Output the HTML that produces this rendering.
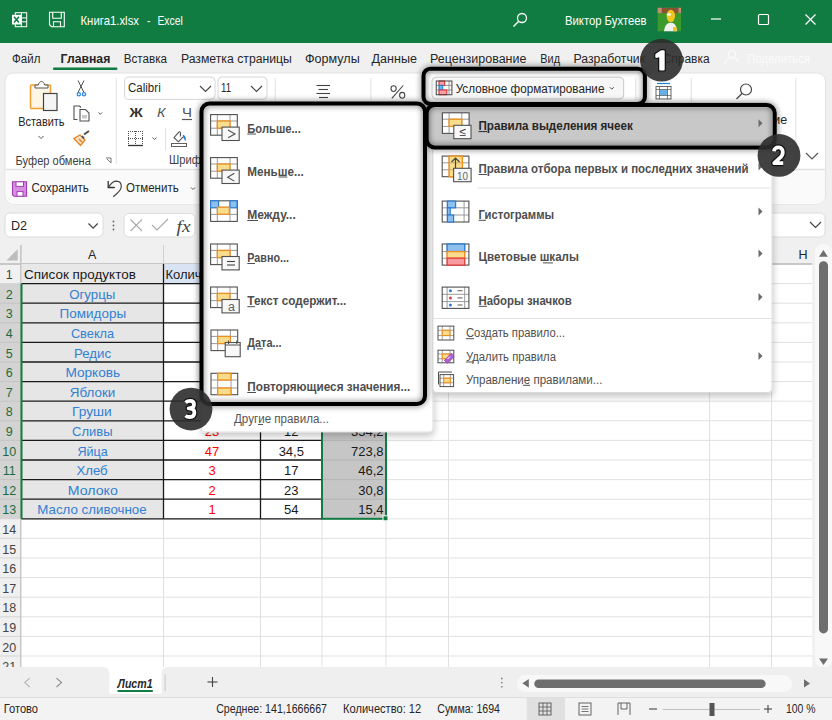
<!DOCTYPE html><html><head><meta charset="utf-8"><style>html,body{margin:0;padding:0;width:832px;height:720px;overflow:hidden;background:#f0f0f0}svg{display:block}text{font-family:"Liberation Sans",sans-serif}</style></head><body>
<svg width="832" height="720" viewBox="0 0 832 720">
<defs><filter id="sh" x="-20%" y="-20%" width="140%" height="140%"><feGaussianBlur in="SourceAlpha" stdDeviation="3"/><feOffset dx="0" dy="2"/><feComponentTransfer><feFuncA type="linear" slope="0.35"/></feComponentTransfer><feMerge><feMergeNode/><feMergeNode in="SourceGraphic"/></feMerge></filter><filter id="sh2" x="-10%" y="-10%" width="120%" height="130%"><feGaussianBlur in="SourceAlpha" stdDeviation="3.5"/><feOffset dx="1" dy="4"/><feComponentTransfer><feFuncA type="linear" slope="0.22"/></feComponentTransfer><feMerge><feMergeNode/><feMergeNode in="SourceGraphic"/></feMerge></filter><filter id="bs" x="-10%" y="-10%" width="120%" height="120%"><feGaussianBlur in="SourceAlpha" stdDeviation="3"/><feComponentTransfer><feFuncA type="linear" slope="0.6"/></feComponentTransfer><feMerge><feMergeNode/><feMergeNode in="SourceGraphic"/></feMerge></filter></defs>
<rect x="0" y="0" width="832" height="720" fill="#f0f0f0" stroke="none" stroke-width="1" rx="0" />
<rect x="0" y="0" width="832" height="43" fill="#117c41" stroke="none" stroke-width="1" rx="0" />
<rect x="15.3" y="12.7" width="11.4" height="14" fill="none" stroke="#fff" stroke-width="1" rx="0" />
<line x1="15.3" y1="17.9" x2="26.7" y2="17.9" stroke="#fff" stroke-width="1" />
<line x1="15.3" y1="21.8" x2="26.7" y2="21.8" stroke="#fff" stroke-width="1" />
<line x1="21.4" y1="12.7" x2="21.4" y2="26.7" stroke="#fff" stroke-width="1" />
<rect x="12" y="14.8" width="9" height="9.7" fill="#fff" stroke="none" stroke-width="1" rx="0" />
<path d="M14 16.8l5 5.8M19 16.8l-5 5.8" fill="none" stroke="#117c41" stroke-width="1.5" />
<path d="M49.5 12.3H64.3V26.7H51.5L49.5 24.7Z" fill="none" stroke="#fff" stroke-width="1.1" />
<path d="M52.7 12.3V18.3H61.3V12.3" fill="none" stroke="#fff" stroke-width="1.1" />
<path d="M53.5 26.7V21.8H60.5V26.7" fill="none" stroke="#fff" stroke-width="1.1" />
<text x="80.5" y="24.8" font-size="13" fill="#ffffff" font-weight="normal" font-style="normal" text-anchor="start" textLength="58.5" lengthAdjust="spacingAndGlyphs" >Книга1.xlsx</text>
<text x="147" y="24.8" font-size="13" fill="#ffffff" font-weight="normal" font-style="normal" text-anchor="start" textLength="3.5" lengthAdjust="spacingAndGlyphs" >-</text>
<text x="157.5" y="24.8" font-size="13" fill="#ffffff" font-weight="normal" font-style="normal" text-anchor="start" textLength="25.2" lengthAdjust="spacingAndGlyphs" >Excel</text>
<circle cx="522" cy="18" r="4.5" fill="none" stroke="#fff" stroke-width="1.3"/>
<line x1="518.5" y1="21.5" x2="513.5" y2="26.5" stroke="#fff" stroke-width="1.4" />
<text x="565" y="24.8" font-size="13" fill="#ffffff" font-weight="normal" font-style="normal" text-anchor="start" textLength="81.5" lengthAdjust="spacingAndGlyphs" >Виктор Бухтеев</text>
<rect x="657.7" y="7.8" width="23.3" height="23.4" fill="#3c9a2c" stroke="none" stroke-width="1" rx="0" />
<rect x="657.7" y="7.8" width="23.3" height="5.3" fill="#8a5430" stroke="none" stroke-width="1" rx="0" />
<rect x="657.7" y="7.8" width="4" height="5.3" fill="#c09070" stroke="none" stroke-width="1" rx="0" />
<rect x="678.5" y="7.8" width="2.5" height="5.3" fill="#c09070" stroke="none" stroke-width="1" rx="0" />
<ellipse cx="670.8" cy="16" rx="4.2" ry="6.3" fill="#f2c420"/>
<ellipse cx="669" cy="14.5" rx="2" ry="1.3" fill="#ffffff"/>
<path d="M664 31.2c0.5-4 2-8.5 6.5-8.5s6 3 6.5 8.5z" fill="#f0f0f0" stroke="none" stroke-width="1" />
<rect x="673" y="27" width="3.5" height="4.2" fill="#f2c420" stroke="none" stroke-width="1" rx="0" />
<line x1="711" y1="19" x2="721" y2="19" stroke="#fff" stroke-width="1.2" />
<rect x="758.5" y="14.5" width="10" height="10" fill="none" stroke="#fff" stroke-width="1.2" rx="1" />
<line x1="805.5" y1="14.5" x2="815.5" y2="24.5" stroke="#fff" stroke-width="1.2" />
<line x1="815.5" y1="14.5" x2="805.5" y2="24.5" stroke="#fff" stroke-width="1.2" />
<text x="12.1" y="62.7" font-size="12.5" fill="#262626" font-weight="normal" font-style="normal" text-anchor="start" textLength="28.3" lengthAdjust="spacingAndGlyphs" >Файл</text>
<text x="60.6" y="62.7" font-size="12.5" fill="#262626" font-weight="bold" font-style="normal" text-anchor="start" textLength="49.7" lengthAdjust="spacingAndGlyphs" >Главная</text>
<text x="123.7" y="62.7" font-size="12.5" fill="#262626" font-weight="normal" font-style="normal" text-anchor="start" textLength="43.3" lengthAdjust="spacingAndGlyphs" >Вставка</text>
<text x="180.9" y="62.7" font-size="12.5" fill="#262626" font-weight="normal" font-style="normal" text-anchor="start" textLength="111" lengthAdjust="spacingAndGlyphs" >Разметка страницы</text>
<text x="305" y="62.7" font-size="12.5" fill="#262626" font-weight="normal" font-style="normal" text-anchor="start" textLength="54.7" lengthAdjust="spacingAndGlyphs" >Формулы</text>
<text x="371.6" y="62.7" font-size="12.5" fill="#262626" font-weight="normal" font-style="normal" text-anchor="start" textLength="45.3" lengthAdjust="spacingAndGlyphs" >Данные</text>
<text x="430" y="62.7" font-size="12.5" fill="#262626" font-weight="normal" font-style="normal" text-anchor="start" textLength="96.4" lengthAdjust="spacingAndGlyphs" >Рецензирование</text>
<text x="540.3" y="62.7" font-size="12.5" fill="#262626" font-weight="normal" font-style="normal" text-anchor="start" textLength="19.7" lengthAdjust="spacingAndGlyphs" >Вид</text>
<text x="573.5" y="62.7" font-size="12.5" fill="#262626" font-weight="normal" font-style="normal" text-anchor="start" textLength="71.5" lengthAdjust="spacingAndGlyphs" >Разработчик</text>
<text x="662.6" y="62.7" font-size="12.5" fill="#262626" font-weight="normal" font-style="normal" text-anchor="start" textLength="47" lengthAdjust="spacingAndGlyphs" >Справка</text>
<rect x="53" y="67.5" width="64.4" height="2.5" fill="#117c41" stroke="none" stroke-width="1" rx="1" />
<circle cx="732" cy="54" r="3.5" fill="none" stroke="#fbfbfb" stroke-width="1.2"/>
<path d="M725 65c0-5 3-7 7-7s6 2 6.5 4" fill="none" stroke="#fbfbfb" stroke-width="1.2" />
<text x="747.3" y="62.7" font-size="12.5" fill="#fbfbfb" font-weight="normal" font-style="normal" text-anchor="start" textLength="62.5" lengthAdjust="spacingAndGlyphs" >Поделиться</text>
<rect x="5" y="73" width="820.5" height="131" fill="#ffffff" stroke="#e2e2e2" stroke-width="1" rx="8" />
<path d="M5.5 170H825V196A8 8 0 0 1 817 204H13.5A8 8 0 0 1 5.5 196Z" fill="#fafafa" stroke="none" stroke-width="1" />
<line x1="6" y1="169.5" x2="825" y2="169.5" stroke="#e2e2e2" stroke-width="1.6" />
<rect x="30.5" y="85" width="20" height="23.5" fill="#fdf5e6" stroke="#f0a030" stroke-width="1.5" rx="1" />
<path d="M35 88v-3h3.5c0-2 1.5-3.5 3-3.5s3 1.5 3 3.5h3.5v3z" fill="#fff" stroke="#555" stroke-width="1" />
<rect x="43.5" y="93.5" width="13.5" height="17" fill="#f5f5f5" stroke="#444" stroke-width="1.2" rx="0" />
<text x="18.2" y="126" font-size="12.5" fill="#262626" font-weight="normal" font-style="normal" text-anchor="start" textLength="46.3" lengthAdjust="spacingAndGlyphs" >Вставить</text>
<path d="M38.5 136l2.5 2.5 2.5-2.5" fill="none" stroke="#555" stroke-width="1" />
<path d="M78 80.5l6 12M84 80.5l-6 12" fill="none" stroke="#505050" stroke-width="1" />
<circle cx="78.8" cy="94.3" r="1.6" fill="none" stroke="#2b8ae0" stroke-width="1.3"/><circle cx="84" cy="94.3" r="1.6" fill="none" stroke="#2b8ae0" stroke-width="1.3"/>
<path d="M77.5 119.5h-3.5v-13.5h5.5l1.5 1.5" fill="none" stroke="#505050" stroke-width="1.1" />
<path d="M80 109.5h5.5l3.5 3.5v8h-9z" fill="#fff" stroke="#505050" stroke-width="1.1" />
<rect x="82" y="115" width="5" height="3.5" fill="#c8c8c8" stroke="none" stroke-width="1" rx="0" />
<path d="M98.5 112.5l1.8 1.8 1.8-1.8" fill="none" stroke="#555" stroke-width="1" />
<path d="M74 138.5l6.5 7 4.5-5.5-5-5z" fill="#fbe3c6" stroke="#e88020" stroke-width="1.3" />
<path d="M79 139l3 3" fill="none" stroke="#e88020" stroke-width="1.5" />
<path d="M82 136l2 2.5M84 134.5l5-3.5" fill="none" stroke="#505050" stroke-width="2" />
<text x="15.6" y="164.5" font-size="12.5" fill="#404040" font-weight="normal" font-style="normal" text-anchor="start" textLength="75.3" lengthAdjust="spacingAndGlyphs" >Буфер обмена</text>
<path d="M106 158h5v5M107 159l4 4" fill="none" stroke="#666" stroke-width="0.9" />
<line x1="116.25" y1="78" x2="116.25" y2="164" stroke="#e1e1e1" stroke-width="1" />
<rect x="124.6" y="77" width="90.4" height="22.4" fill="#fff" stroke="#d6d6d6" stroke-width="1" rx="4" />
<text x="128" y="92.2" font-size="12.5" fill="#262626" font-weight="normal" font-style="normal" text-anchor="start" textLength="32.7" lengthAdjust="spacingAndGlyphs" >Calibri</text>
<path d="M200 86l5.5 5.5 5.5-5.5" fill="none" stroke="#444" stroke-width="1.1" />
<rect x="218" y="77" width="49" height="22.4" fill="#fff" stroke="#d6d6d6" stroke-width="1" rx="4" />
<text x="221" y="92.2" font-size="12" fill="#262626" font-weight="normal" font-style="normal" text-anchor="start" textLength="10" lengthAdjust="spacingAndGlyphs" >11</text>
<path d="M251 86l5.5 5.5 5.5-5.5" fill="none" stroke="#444" stroke-width="1.1" />
<line x1="275.2" y1="78" x2="275.2" y2="100" stroke="#e1e1e1" stroke-width="1" />
<line x1="370.9" y1="78" x2="370.9" y2="100" stroke="#e1e1e1" stroke-width="1" />
<line x1="316.5" y1="85.5" x2="330" y2="85.5" stroke="#444" stroke-width="1.1" />
<line x1="318.5" y1="89.5" x2="328" y2="89.5" stroke="#444" stroke-width="1.1" />
<line x1="316.5" y1="93.5" x2="330" y2="93.5" stroke="#444" stroke-width="1.1" />
<line x1="319" y1="97.5" x2="328" y2="97.5" stroke="#444" stroke-width="1.1" />
<ellipse cx="393.6" cy="88.6" rx="2.6" ry="2.9" fill="none" stroke="#444" stroke-width="1.1"/><ellipse cx="402.2" cy="95.3" rx="2.6" ry="2.9" fill="none" stroke="#444" stroke-width="1.1"/>
<line x1="403.2" y1="85.5" x2="391.8" y2="98.4" stroke="#444" stroke-width="1.1" />
<text x="129.4" y="117" font-size="13.5" fill="#333" font-weight="bold" font-style="normal" text-anchor="start" textLength="13.2" lengthAdjust="spacingAndGlyphs" >Ж</text>
<text x="157" y="117" font-size="13" fill="#555" font-weight="normal" font-style="italic" text-anchor="start" textLength="8.5" lengthAdjust="spacingAndGlyphs" >К</text>
<text x="182" y="117" font-size="13" fill="#555" font-weight="normal" font-style="normal" text-anchor="start" textLength="10" lengthAdjust="spacingAndGlyphs" >Ч</text>
<line x1="182" y1="119.5" x2="192" y2="119.5" stroke="#555" stroke-width="1.2" />
<line x1="128" y1="131.5" x2="143" y2="131.5" stroke="#555" stroke-width="1" stroke-dasharray="1 1"/>
<line x1="128" y1="138.5" x2="143" y2="138.5" stroke="#555" stroke-width="1" stroke-dasharray="1 1"/>
<line x1="128.5" y1="131" x2="128.5" y2="145" stroke="#555" stroke-width="1" stroke-dasharray="1 1"/>
<line x1="135.5" y1="131" x2="135.5" y2="145" stroke="#555" stroke-width="1" stroke-dasharray="1 1"/>
<line x1="142.5" y1="131" x2="142.5" y2="145" stroke="#555" stroke-width="1" stroke-dasharray="1 1"/>
<line x1="128" y1="145.5" x2="143" y2="145.5" stroke="#333" stroke-width="1.3" />
<path d="M152.5 137.5l2 2 2-2" fill="none" stroke="#555" stroke-width="1" />
<line x1="165.5" y1="127.6" x2="165.5" y2="150.5" stroke="#e1e1e1" stroke-width="1" />
<path d="M180.4 136.5V132.8Q180 131.2 178.8 132.2L174 137.6L178.5 141.8L183.1 136.8" fill="none" stroke="#505050" stroke-width="1.1" />
<path d="M182.6 134.4Q186.2 135.2 185.9 141.2Q184.2 139.6 183.3 137.6Z" fill="#2b7cd3" stroke="none" stroke-width="1" />
<rect x="171.5" y="143.5" width="15" height="3" fill="none" stroke="#606060" stroke-width="1" rx="0" />
<text x="169" y="163.75" font-size="12.5" fill="#404040" font-weight="normal" font-style="normal" text-anchor="start" textLength="32" lengthAdjust="spacingAndGlyphs" >Шриф</text>
<rect x="432" y="77.2" width="191.7" height="21.8" fill="#f7f7f7" stroke="#c8c8c8" stroke-width="1" rx="4" />
<rect x="436.25" y="81" width="15.65" height="13.75" fill="#fff" stroke="none" stroke-width="1" rx="0" />
<line x1="439.1" y1="81" x2="439.1" y2="94.75" stroke="#888" stroke-width="0.9" />
<line x1="449" y1="81" x2="449" y2="94.75" stroke="#888" stroke-width="0.9" />
<line x1="436.25" y1="85.4" x2="451.9" y2="85.4" stroke="#888" stroke-width="0.9" />
<line x1="436.25" y1="90" x2="451.9" y2="90" stroke="#888" stroke-width="0.9" />
<rect x="439.1" y="81" width="5.6" height="4.4" fill="#f7a0a8" stroke="#e02a2a" stroke-width="1" rx="0" />
<rect x="439.1" y="85.4" width="3.6" height="4.6" fill="#6ab4f0" stroke="#1a7fd6" stroke-width="1" rx="0" />
<rect x="439.1" y="90" width="7.7" height="4.75" fill="#f7a0a8" stroke="#e02a2a" stroke-width="1" rx="0" />
<rect x="436.25" y="81" width="15.65" height="13.75" fill="none" stroke="#444" stroke-width="1" rx="0" />
<text x="455.7" y="93" font-size="12.5" fill="#262626" font-weight="normal" font-style="normal" text-anchor="start" textLength="148.7" lengthAdjust="spacingAndGlyphs" >Условное форматирование</text>
<path d="M609.8 87.2l2 2 2-2" fill="none" stroke="#555" stroke-width="1" />
<line x1="635.8" y1="78" x2="635.8" y2="100" stroke="#e1e1e1" stroke-width="1" />
<rect x="656" y="86.5" width="15" height="12.5" fill="#fff" stroke="#555" stroke-width="0.9" rx="0" />
<rect x="659.5" y="89.5" width="8" height="6" fill="#6aaee8" stroke="none" stroke-width="1" rx="0" />
<line x1="656" y1="89.5" x2="671" y2="89.5" stroke="#555" stroke-width="0.7" />
<line x1="656" y1="95.5" x2="671" y2="95.5" stroke="#555" stroke-width="0.7" />
<line x1="659.5" y1="86.5" x2="659.5" y2="99" stroke="#555" stroke-width="0.7" />
<line x1="667.5" y1="86.5" x2="667.5" y2="99" stroke="#555" stroke-width="0.7" />
<line x1="657" y1="83.5" x2="670" y2="83.5" stroke="#1a7fd6" stroke-width="1.2" />
<line x1="691.3" y1="78" x2="691.3" y2="164" stroke="#e1e1e1" stroke-width="1" />
<circle cx="746" cy="89.5" r="5.5" fill="none" stroke="#444" stroke-width="1.2"/>
<line x1="742" y1="93.5" x2="736.5" y2="99" stroke="#444" stroke-width="1.3" />
<text x="787.2" y="123.6" font-size="12.5" fill="#262626" font-weight="normal" font-style="normal" text-anchor="end" >ие</text>
<line x1="795.8" y1="78" x2="795.8" y2="164" stroke="#e1e1e1" stroke-width="1" />
<path d="M806 153l6 6 6-6" fill="none" stroke="#555" stroke-width="1.2" />
<path d="M12.5 181.8H26.5V196.2H14L12.5 194.7Z" fill="#d88ee0" stroke="#a23cb4" stroke-width="1.1" />
<rect x="16" y="181.8" width="7.5" height="4.6" fill="#ffffff" stroke="#a23cb4" stroke-width="1" rx="0" />
<rect x="17" y="191.6" width="6" height="4.6" fill="#ffffff" stroke="#a23cb4" stroke-width="1" rx="0" />
<text x="31.5" y="191.7" font-size="12.5" fill="#262626" font-weight="normal" font-style="normal" text-anchor="start" textLength="57.3" lengthAdjust="spacingAndGlyphs" >Сохранить</text>
<path d="M108.2 181V187.5H114.8" fill="none" stroke="#333" stroke-width="1.3" />
<path d="M108.8 186.8Q112.5 181.2 116.5 181.2Q121.3 181.4 121.3 186.5Q121.3 190.5 113.2 196.8" fill="none" stroke="#444" stroke-width="1.2" />
<text x="126" y="191.7" font-size="12.5" fill="#262626" font-weight="normal" font-style="normal" text-anchor="start" textLength="52.7" lengthAdjust="spacingAndGlyphs" >Отменить</text>
<path d="M191 187.5l2 2 2-2" fill="none" stroke="#555" stroke-width="1" />
<rect x="5" y="213" width="98" height="24" fill="#fff" stroke="#dcdcdc" stroke-width="1" rx="5" />
<text x="11" y="230" font-size="12" fill="#262626" font-weight="normal" font-style="normal" text-anchor="start" textLength="16" lengthAdjust="spacingAndGlyphs" >D2</text>
<path d="M88.5 223.5l4.6 4.6 4.6-4.6" fill="none" stroke="#444" stroke-width="1.2" />
<circle cx="113.5" cy="221.5" r="0.9" fill="#666"/>
<circle cx="113.5" cy="225.5" r="0.9" fill="#666"/>
<circle cx="113.5" cy="229.5" r="0.9" fill="#666"/>
<rect x="124" y="213.4" width="71" height="23.6" fill="#fff" stroke="#dcdcdc" stroke-width="1" rx="5" />
<line x1="130.5" y1="219.5" x2="142" y2="231" stroke="#aaa" stroke-width="1.1" />
<line x1="142" y1="219.5" x2="130.5" y2="231" stroke="#aaa" stroke-width="1.1" />
<path d="M152 225l5 5 11-11" fill="none" stroke="#aaa" stroke-width="1.1" />
<text x="176.5" y="231.5" font-size="16" fill="#444" font-weight="normal" font-style="italic" text-anchor="start" textLength="14" lengthAdjust="spacingAndGlyphs" style="font-family:Liberation Serif">fx</text>
<rect x="430" y="213" width="395" height="24" fill="#fff" stroke="#dcdcdc" stroke-width="1" rx="5" />
<path d="M810 222l5.5 5.5 5.5-5.5" fill="none" stroke="#444" stroke-width="1.2" />
<rect x="21" y="264" width="791.5" height="403" fill="#ffffff" stroke="none" stroke-width="1" rx="0" />
<rect x="0" y="245" width="812.5" height="19" fill="#f0f0f0" stroke="none" stroke-width="1" rx="0" />
<path d="M17.7 249v11.6h-11.2z" fill="#bdbdbd" stroke="none" stroke-width="1" />
<rect x="0" y="264" width="21" height="403" fill="#f0f0f0" stroke="none" stroke-width="1" rx="0" />
<rect x="0" y="283.6" width="21" height="235.19999999999993" fill="#d3d3d3" stroke="none" stroke-width="1" rx="0" />
<line x1="21" y1="245" x2="21" y2="264" stroke="#d0d0d0" stroke-width="1" />
<line x1="163.5" y1="245" x2="163.5" y2="264" stroke="#d0d0d0" stroke-width="1" />
<line x1="260.5" y1="245" x2="260.5" y2="264" stroke="#d0d0d0" stroke-width="1" />
<line x1="322" y1="245" x2="322" y2="264" stroke="#d0d0d0" stroke-width="1" />
<line x1="386" y1="245" x2="386" y2="264" stroke="#d0d0d0" stroke-width="1" />
<line x1="448.5" y1="245" x2="448.5" y2="264" stroke="#d0d0d0" stroke-width="1" />
<line x1="709.5" y1="245" x2="709.5" y2="264" stroke="#d0d0d0" stroke-width="1" />
<line x1="771.5" y1="245" x2="771.5" y2="264" stroke="#d0d0d0" stroke-width="1" />
<line x1="0" y1="264" x2="812.5" y2="264" stroke="#c8c8c8" stroke-width="2" />
<text x="92.25" y="258.5" font-size="12.5" fill="#262626" font-weight="normal" font-style="normal" text-anchor="middle" >A</text>
<text x="803" y="258.5" font-size="12.5" fill="#262626" font-weight="normal" font-style="normal" text-anchor="middle" >H</text>
<line x1="21" y1="283.6" x2="812.5" y2="283.6" stroke="#e1e1e1" stroke-width="1" />
<line x1="21" y1="303.20000000000005" x2="812.5" y2="303.20000000000005" stroke="#e1e1e1" stroke-width="1" />
<line x1="21" y1="322.8" x2="812.5" y2="322.8" stroke="#e1e1e1" stroke-width="1" />
<line x1="21" y1="342.40000000000003" x2="812.5" y2="342.40000000000003" stroke="#e1e1e1" stroke-width="1" />
<line x1="21" y1="362.0" x2="812.5" y2="362.0" stroke="#e1e1e1" stroke-width="1" />
<line x1="21" y1="381.6" x2="812.5" y2="381.6" stroke="#e1e1e1" stroke-width="1" />
<line x1="21" y1="401.20000000000005" x2="812.5" y2="401.20000000000005" stroke="#e1e1e1" stroke-width="1" />
<line x1="21" y1="420.80000000000007" x2="812.5" y2="420.80000000000007" stroke="#e1e1e1" stroke-width="1" />
<line x1="21" y1="440.40000000000003" x2="812.5" y2="440.40000000000003" stroke="#e1e1e1" stroke-width="1" />
<line x1="21" y1="460.0" x2="812.5" y2="460.0" stroke="#e1e1e1" stroke-width="1" />
<line x1="21" y1="479.6" x2="812.5" y2="479.6" stroke="#e1e1e1" stroke-width="1" />
<line x1="21" y1="499.20000000000005" x2="812.5" y2="499.20000000000005" stroke="#e1e1e1" stroke-width="1" />
<line x1="21" y1="518.8000000000001" x2="812.5" y2="518.8000000000001" stroke="#e1e1e1" stroke-width="1" />
<line x1="21" y1="538.4" x2="812.5" y2="538.4" stroke="#e1e1e1" stroke-width="1" />
<line x1="21" y1="558.0000000000001" x2="812.5" y2="558.0000000000001" stroke="#e1e1e1" stroke-width="1" />
<line x1="21" y1="577.6" x2="812.5" y2="577.6" stroke="#e1e1e1" stroke-width="1" />
<line x1="21" y1="597.2" x2="812.5" y2="597.2" stroke="#e1e1e1" stroke-width="1" />
<line x1="21" y1="616.8000000000001" x2="812.5" y2="616.8000000000001" stroke="#e1e1e1" stroke-width="1" />
<line x1="21" y1="636.4" x2="812.5" y2="636.4" stroke="#e1e1e1" stroke-width="1" />
<line x1="21" y1="656.0000000000001" x2="812.5" y2="656.0000000000001" stroke="#e1e1e1" stroke-width="1" />
<line x1="163.5" y1="264" x2="163.5" y2="667" stroke="#e1e1e1" stroke-width="1" />
<line x1="260.5" y1="264" x2="260.5" y2="667" stroke="#e1e1e1" stroke-width="1" />
<line x1="322" y1="264" x2="322" y2="667" stroke="#e1e1e1" stroke-width="1" />
<line x1="386" y1="264" x2="386" y2="667" stroke="#e1e1e1" stroke-width="1" />
<line x1="448.5" y1="264" x2="448.5" y2="667" stroke="#e1e1e1" stroke-width="1" />
<line x1="709.5" y1="264" x2="709.5" y2="667" stroke="#e1e1e1" stroke-width="1" />
<line x1="771.5" y1="264" x2="771.5" y2="667" stroke="#e1e1e1" stroke-width="1" />
<rect x="21" y="264.0" width="142.5" height="19.6" fill="#e8e8e8" stroke="none" stroke-width="1" rx="0" />
<rect x="163.5" y="264.0" width="97" height="19.6" fill="#dae3f3" stroke="none" stroke-width="1" rx="0" />
<rect x="21" y="283.6" width="142.5" height="235.20000000000002" fill="#e7e6e6" stroke="none" stroke-width="1" rx="0" />
<rect x="322" y="283.6" width="64" height="235.20000000000002" fill="#c6c6c6" stroke="none" stroke-width="1" rx="0" />
<line x1="322" y1="303.20000000000005" x2="386" y2="303.20000000000005" stroke="#b4b4b4" stroke-width="1" />
<line x1="322" y1="322.8" x2="386" y2="322.8" stroke="#b4b4b4" stroke-width="1" />
<line x1="322" y1="342.40000000000003" x2="386" y2="342.40000000000003" stroke="#b4b4b4" stroke-width="1" />
<line x1="322" y1="362.0" x2="386" y2="362.0" stroke="#b4b4b4" stroke-width="1" />
<line x1="322" y1="381.6" x2="386" y2="381.6" stroke="#b4b4b4" stroke-width="1" />
<line x1="322" y1="401.20000000000005" x2="386" y2="401.20000000000005" stroke="#b4b4b4" stroke-width="1" />
<line x1="322" y1="420.80000000000007" x2="386" y2="420.80000000000007" stroke="#b4b4b4" stroke-width="1" />
<line x1="322" y1="440.40000000000003" x2="386" y2="440.40000000000003" stroke="#b4b4b4" stroke-width="1" />
<line x1="322" y1="460.0" x2="386" y2="460.0" stroke="#b4b4b4" stroke-width="1" />
<line x1="322" y1="479.6" x2="386" y2="479.6" stroke="#b4b4b4" stroke-width="1" />
<line x1="322" y1="499.20000000000005" x2="386" y2="499.20000000000005" stroke="#b4b4b4" stroke-width="1" />
<line x1="21" y1="283.6" x2="322" y2="283.6" stroke="#1a1a1a" stroke-width="1.3" />
<line x1="21" y1="303.20000000000005" x2="322" y2="303.20000000000005" stroke="#1a1a1a" stroke-width="1.3" />
<line x1="21" y1="322.8" x2="322" y2="322.8" stroke="#1a1a1a" stroke-width="1.3" />
<line x1="21" y1="342.40000000000003" x2="322" y2="342.40000000000003" stroke="#1a1a1a" stroke-width="1.3" />
<line x1="21" y1="362.0" x2="322" y2="362.0" stroke="#1a1a1a" stroke-width="1.3" />
<line x1="21" y1="381.6" x2="322" y2="381.6" stroke="#1a1a1a" stroke-width="1.3" />
<line x1="21" y1="401.20000000000005" x2="322" y2="401.20000000000005" stroke="#1a1a1a" stroke-width="1.3" />
<line x1="21" y1="420.80000000000007" x2="322" y2="420.80000000000007" stroke="#1a1a1a" stroke-width="1.3" />
<line x1="21" y1="440.40000000000003" x2="322" y2="440.40000000000003" stroke="#1a1a1a" stroke-width="1.3" />
<line x1="21" y1="460.0" x2="322" y2="460.0" stroke="#1a1a1a" stroke-width="1.3" />
<line x1="21" y1="479.6" x2="322" y2="479.6" stroke="#1a1a1a" stroke-width="1.3" />
<line x1="21" y1="499.20000000000005" x2="322" y2="499.20000000000005" stroke="#1a1a1a" stroke-width="1.3" />
<line x1="21" y1="518.8000000000001" x2="322" y2="518.8000000000001" stroke="#1a1a1a" stroke-width="1.3" />
<line x1="163.5" y1="264.0" x2="163.5" y2="518.8" stroke="#1a1a1a" stroke-width="1.3" />
<line x1="260.5" y1="264.0" x2="260.5" y2="518.8" stroke="#1a1a1a" stroke-width="1.3" />
<line x1="322" y1="264.0" x2="322" y2="518.8" stroke="#1a1a1a" stroke-width="1.3" />
<text x="9.2" y="279.2" font-size="12.5" fill="#444" font-weight="normal" font-style="normal" text-anchor="middle" >1</text>
<text x="9.2" y="298.8" font-size="12.5" fill="#1d6b3a" font-weight="normal" font-style="normal" text-anchor="middle" >2</text>
<text x="9.2" y="318.4" font-size="12.5" fill="#1d6b3a" font-weight="normal" font-style="normal" text-anchor="middle" >3</text>
<text x="9.2" y="338.0" font-size="12.5" fill="#1d6b3a" font-weight="normal" font-style="normal" text-anchor="middle" >4</text>
<text x="9.2" y="357.59999999999997" font-size="12.5" fill="#1d6b3a" font-weight="normal" font-style="normal" text-anchor="middle" >5</text>
<text x="9.2" y="377.2" font-size="12.5" fill="#1d6b3a" font-weight="normal" font-style="normal" text-anchor="middle" >6</text>
<text x="9.2" y="396.8" font-size="12.5" fill="#1d6b3a" font-weight="normal" font-style="normal" text-anchor="middle" >7</text>
<text x="9.2" y="416.40000000000003" font-size="12.5" fill="#1d6b3a" font-weight="normal" font-style="normal" text-anchor="middle" >8</text>
<text x="9.2" y="436.0" font-size="12.5" fill="#1d6b3a" font-weight="normal" font-style="normal" text-anchor="middle" >9</text>
<text x="9.2" y="455.59999999999997" font-size="12.5" fill="#1d6b3a" font-weight="normal" font-style="normal" text-anchor="middle" >10</text>
<text x="9.2" y="475.2" font-size="12.5" fill="#1d6b3a" font-weight="normal" font-style="normal" text-anchor="middle" >11</text>
<text x="9.2" y="494.8" font-size="12.5" fill="#1d6b3a" font-weight="normal" font-style="normal" text-anchor="middle" >12</text>
<text x="9.2" y="514.4000000000001" font-size="12.5" fill="#1d6b3a" font-weight="normal" font-style="normal" text-anchor="middle" >13</text>
<text x="9.2" y="534.0" font-size="12.5" fill="#444" font-weight="normal" font-style="normal" text-anchor="middle" >14</text>
<text x="9.2" y="553.6000000000001" font-size="12.5" fill="#444" font-weight="normal" font-style="normal" text-anchor="middle" >15</text>
<text x="9.2" y="573.2" font-size="12.5" fill="#444" font-weight="normal" font-style="normal" text-anchor="middle" >16</text>
<text x="9.2" y="592.8000000000001" font-size="12.5" fill="#444" font-weight="normal" font-style="normal" text-anchor="middle" >17</text>
<text x="9.2" y="612.4000000000001" font-size="12.5" fill="#444" font-weight="normal" font-style="normal" text-anchor="middle" >18</text>
<text x="9.2" y="632.0" font-size="12.5" fill="#444" font-weight="normal" font-style="normal" text-anchor="middle" >19</text>
<text x="9.2" y="651.6000000000001" font-size="12.5" fill="#444" font-weight="normal" font-style="normal" text-anchor="middle" >20</text>
<text x="9.2" y="671.2" font-size="12.5" fill="#444" font-weight="normal" font-style="normal" text-anchor="middle" >21</text>
<line x1="0" y1="283.6" x2="21" y2="283.6" stroke="#d4d4d4" stroke-width="1" />
<line x1="0" y1="303.20000000000005" x2="21" y2="303.20000000000005" stroke="#c4c4c4" stroke-width="1" />
<line x1="0" y1="322.8" x2="21" y2="322.8" stroke="#c4c4c4" stroke-width="1" />
<line x1="0" y1="342.40000000000003" x2="21" y2="342.40000000000003" stroke="#c4c4c4" stroke-width="1" />
<line x1="0" y1="362.0" x2="21" y2="362.0" stroke="#c4c4c4" stroke-width="1" />
<line x1="0" y1="381.6" x2="21" y2="381.6" stroke="#c4c4c4" stroke-width="1" />
<line x1="0" y1="401.20000000000005" x2="21" y2="401.20000000000005" stroke="#c4c4c4" stroke-width="1" />
<line x1="0" y1="420.80000000000007" x2="21" y2="420.80000000000007" stroke="#c4c4c4" stroke-width="1" />
<line x1="0" y1="440.40000000000003" x2="21" y2="440.40000000000003" stroke="#c4c4c4" stroke-width="1" />
<line x1="0" y1="460.0" x2="21" y2="460.0" stroke="#c4c4c4" stroke-width="1" />
<line x1="0" y1="479.6" x2="21" y2="479.6" stroke="#c4c4c4" stroke-width="1" />
<line x1="0" y1="499.20000000000005" x2="21" y2="499.20000000000005" stroke="#c4c4c4" stroke-width="1" />
<line x1="0" y1="518.8000000000001" x2="21" y2="518.8000000000001" stroke="#d4d4d4" stroke-width="1" />
<line x1="0" y1="538.4" x2="21" y2="538.4" stroke="#d4d4d4" stroke-width="1" />
<line x1="0" y1="558.0000000000001" x2="21" y2="558.0000000000001" stroke="#d4d4d4" stroke-width="1" />
<line x1="0" y1="577.6" x2="21" y2="577.6" stroke="#d4d4d4" stroke-width="1" />
<line x1="0" y1="597.2" x2="21" y2="597.2" stroke="#d4d4d4" stroke-width="1" />
<line x1="0" y1="616.8000000000001" x2="21" y2="616.8000000000001" stroke="#d4d4d4" stroke-width="1" />
<line x1="0" y1="636.4" x2="21" y2="636.4" stroke="#d4d4d4" stroke-width="1" />
<line x1="0" y1="656.0000000000001" x2="21" y2="656.0000000000001" stroke="#d4d4d4" stroke-width="1" />
<line x1="0" y1="675.6" x2="21" y2="675.6" stroke="#d4d4d4" stroke-width="1" />
<line x1="20.75" y1="245" x2="20.75" y2="667" stroke="#c8c8c8" stroke-width="1.5" />
<line x1="21.5" y1="283.6" x2="21.5" y2="518.8" stroke="#117c41" stroke-width="2" />
<text x="24" y="279.2" font-size="13" fill="#1a1a1a" font-weight="normal" font-style="normal" text-anchor="start" textLength="111.8" lengthAdjust="spacingAndGlyphs" >Список продуктов</text>
<text x="165.5" y="279.2" font-size="13" fill="#1a1a1a" font-weight="normal" font-style="normal" text-anchor="start" >Количество</text>
<text x="69.2" y="298.70000000000005" font-size="13" fill="#3180d2" font-weight="normal" font-style="normal" text-anchor="start" textLength="46.2" lengthAdjust="spacingAndGlyphs" >Огурцы</text>
<text x="59.6" y="318.3" font-size="13" fill="#3180d2" font-weight="normal" font-style="normal" text-anchor="start" textLength="66.6" lengthAdjust="spacingAndGlyphs" >Помидоры</text>
<text x="70.9" y="337.90000000000003" font-size="13" fill="#3180d2" font-weight="normal" font-style="normal" text-anchor="start" textLength="43.3" lengthAdjust="spacingAndGlyphs" >Свекла</text>
<text x="74" y="357.5" font-size="13" fill="#3180d2" font-weight="normal" font-style="normal" text-anchor="start" textLength="37" lengthAdjust="spacingAndGlyphs" >Редис</text>
<text x="65.4" y="377.1" font-size="13" fill="#3180d2" font-weight="normal" font-style="normal" text-anchor="start" textLength="54.8" lengthAdjust="spacingAndGlyphs" >Морковь</text>
<text x="69.7" y="396.70000000000005" font-size="13" fill="#3180d2" font-weight="normal" font-style="normal" text-anchor="start" textLength="45.7" lengthAdjust="spacingAndGlyphs" >Яблоки</text>
<text x="72.1" y="416.30000000000007" font-size="13" fill="#3180d2" font-weight="normal" font-style="normal" text-anchor="start" textLength="39.7" lengthAdjust="spacingAndGlyphs" >Груши</text>
<text x="72.1" y="435.90000000000003" font-size="13" fill="#3180d2" font-weight="normal" font-style="normal" text-anchor="start" textLength="40.4" lengthAdjust="spacingAndGlyphs" >Сливы</text>
<text x="77.4" y="455.5" font-size="13" fill="#3180d2" font-weight="normal" font-style="normal" text-anchor="start" textLength="30.3" lengthAdjust="spacingAndGlyphs" >Яйца</text>
<text x="76.4" y="475.1" font-size="13" fill="#3180d2" font-weight="normal" font-style="normal" text-anchor="start" textLength="31.3" lengthAdjust="spacingAndGlyphs" >Хлеб</text>
<text x="67.8" y="494.70000000000005" font-size="13" fill="#3180d2" font-weight="normal" font-style="normal" text-anchor="start" textLength="50.0" lengthAdjust="spacingAndGlyphs" >Молоко</text>
<text x="37.3" y="514.3000000000001" font-size="13" fill="#3180d2" font-weight="normal" font-style="normal" text-anchor="start" textLength="109.3" lengthAdjust="spacingAndGlyphs" >Масло сливочное</text>
<text x="212" y="435.90000000000003" font-size="13" fill="#ff0000" font-weight="normal" font-style="normal" text-anchor="middle" >23</text>
<text x="291.3" y="435.90000000000003" font-size="13" fill="#1a1a1a" font-weight="normal" font-style="normal" text-anchor="middle" >12</text>
<text x="383.5" y="435.90000000000003" font-size="13" fill="#1a1a1a" font-weight="normal" font-style="normal" text-anchor="end" >354,2</text>
<text x="212" y="455.5" font-size="13" fill="#ff0000" font-weight="normal" font-style="normal" text-anchor="middle" >47</text>
<text x="291.3" y="455.5" font-size="13" fill="#1a1a1a" font-weight="normal" font-style="normal" text-anchor="middle" >34,5</text>
<text x="383.5" y="455.5" font-size="13" fill="#1a1a1a" font-weight="normal" font-style="normal" text-anchor="end" >723,8</text>
<text x="212" y="475.1" font-size="13" fill="#ff0000" font-weight="normal" font-style="normal" text-anchor="middle" >3</text>
<text x="291.3" y="475.1" font-size="13" fill="#1a1a1a" font-weight="normal" font-style="normal" text-anchor="middle" >17</text>
<text x="383.5" y="475.1" font-size="13" fill="#1a1a1a" font-weight="normal" font-style="normal" text-anchor="end" >46,2</text>
<text x="212" y="494.70000000000005" font-size="13" fill="#ff0000" font-weight="normal" font-style="normal" text-anchor="middle" >2</text>
<text x="291.3" y="494.70000000000005" font-size="13" fill="#1a1a1a" font-weight="normal" font-style="normal" text-anchor="middle" >23</text>
<text x="383.5" y="494.70000000000005" font-size="13" fill="#1a1a1a" font-weight="normal" font-style="normal" text-anchor="end" >30,8</text>
<text x="212" y="514.3000000000001" font-size="13" fill="#ff0000" font-weight="normal" font-style="normal" text-anchor="middle" >1</text>
<text x="291.3" y="514.3000000000001" font-size="13" fill="#1a1a1a" font-weight="normal" font-style="normal" text-anchor="middle" >54</text>
<text x="383.5" y="514.3000000000001" font-size="13" fill="#1a1a1a" font-weight="normal" font-style="normal" text-anchor="end" >15,4</text>
<rect x="322" y="283.6" width="64" height="235.20000000000002" fill="none" stroke="#117c41" stroke-width="2" rx="0" />
<rect x="383" y="515.8" width="5" height="5" fill="#117c41" stroke="#fff" stroke-width="1" rx="0" />
<rect x="812.5" y="245" width="19.5" height="422" fill="#f0f0f0" stroke="none" stroke-width="1" rx="0" />
<rect x="815" y="244" width="17" height="424" fill="#f8f8f8" stroke="none" stroke-width="1" rx="8" />
<path d="M819 256.7l4.4-6.8 4.4 6.8z" fill="#6e6e6e" stroke="none" stroke-width="1" />
<rect x="819" y="261.2" width="9" height="372.2" fill="#6e6e6e" stroke="none" stroke-width="1" rx="4.5" />
<path d="M819 658.4h9l-4.5 6.6z" fill="#6e6e6e" stroke="none" stroke-width="1" />
<rect x="100" y="667" width="72" height="30" fill="#ffffff" stroke="none" stroke-width="1" rx="0" />
<path d="M0 667H103.5A6 6 0 0 1 109.5 673V698H0Z" fill="#efefef" stroke="none" stroke-width="1" />
<path d="M167.5 667H832V698H161.5V673A6 6 0 0 1 167.5 667Z" fill="#efefef" stroke="none" stroke-width="1" />
<path d="M109.5 690V694.7H161.5V690" fill="#ffffff" stroke="none" stroke-width="1" />
<path d="M109.5 694.7H161.5" fill="none" stroke="#e6e6e6" stroke-width="1" />
<rect x="109.5" y="694.7" width="52" height="3.5" fill="#efefef" stroke="none" stroke-width="1" rx="0" />
<path d="M109.5 690.7A4 4 0 0 0 113.5 694.7H157.5A4 4 0 0 0 161.5 690.7V698H109.5Z" fill="#efefef" stroke="none" stroke-width="1" />
<path d="M29.8 678.2l-5 4.4 5 4.4" fill="none" stroke="#b4b4b4" stroke-width="1.1" />
<path d="M56.5 678.2l5 4.4-5 4.4" fill="none" stroke="#8c8c8c" stroke-width="1.1" />
<text x="117.6" y="687.7" font-size="13" fill="#262626" font-weight="bold" font-style="italic" text-anchor="start" textLength="35" lengthAdjust="spacingAndGlyphs" >Лист1</text>
<rect x="117.6" y="690" width="35.2" height="2" fill="#117c41" stroke="none" stroke-width="1" rx="0" />
<line x1="165.1" y1="674.2" x2="165.1" y2="691" stroke="#c8c8c8" stroke-width="1" />
<line x1="207.5" y1="682" x2="217.5" y2="682" stroke="#444" stroke-width="1.1" />
<line x1="212.5" y1="677" x2="212.5" y2="687" stroke="#444" stroke-width="1.1" />
<circle cx="501.8" cy="678.5" r="0.9" fill="#888"/><circle cx="501.8" cy="682.6" r="0.9" fill="#888"/><circle cx="501.8" cy="686.8" r="0.9" fill="#888"/>
<rect x="517" y="675" width="275" height="17" fill="#f8f8f8" stroke="none" stroke-width="1" rx="8.5" />
<path d="M528.8 678.9v8.8l-6.4-4.4z" fill="#6e6e6e" stroke="none" stroke-width="1" />
<rect x="534.25" y="679.5" width="231.4" height="8.5" fill="#6e6e6e" stroke="none" stroke-width="1" rx="4.25" />
<path d="M804 679.3v8.2l6-4.1z" fill="#6e6e6e" stroke="none" stroke-width="1" />
<rect x="0" y="697.5" width="832" height="22.5" fill="#f3f3f3" stroke="none" stroke-width="1" rx="0" />
<line x1="0" y1="697.5" x2="832" y2="697.5" stroke="#dedede" stroke-width="1" />
<text x="3.75" y="713.4" font-size="12" fill="#262626" font-weight="normal" font-style="normal" text-anchor="start" textLength="34.3" lengthAdjust="spacingAndGlyphs" >Готово</text>
<text x="216.2" y="712.5" font-size="12" fill="#262626" font-weight="normal" font-style="normal" text-anchor="start" textLength="110.8" lengthAdjust="spacingAndGlyphs" >Среднее: 141,1666667</text>
<text x="343" y="712.5" font-size="12" fill="#262626" font-weight="normal" font-style="normal" text-anchor="start" textLength="78.2" lengthAdjust="spacingAndGlyphs" >Количество: 12</text>
<text x="437.3" y="712.5" font-size="12" fill="#262626" font-weight="normal" font-style="normal" text-anchor="start" textLength="62.7" lengthAdjust="spacingAndGlyphs" >Сумма: 1694</text>
<rect x="526.75" y="698" width="38.25" height="22" fill="#e0e0e0" stroke="none" stroke-width="1" rx="0" />
<rect x="539" y="703" width="12" height="12" fill="none" stroke="#555" stroke-width="0.9" rx="0" />
<line x1="543" y1="703" x2="543" y2="715" stroke="#555" stroke-width="0.8" />
<line x1="547" y1="703" x2="547" y2="715" stroke="#555" stroke-width="0.8" />
<line x1="539" y1="707" x2="551" y2="707" stroke="#555" stroke-width="0.8" />
<line x1="539" y1="711" x2="551" y2="711" stroke="#555" stroke-width="0.8" />
<rect x="579" y="703" width="12" height="12" fill="none" stroke="#555" stroke-width="0.9" rx="0" />
<line x1="581.5" y1="706.5" x2="588.5" y2="706.5" stroke="#555" stroke-width="0.8" />
<line x1="581.5" y1="709" x2="588.5" y2="709" stroke="#555" stroke-width="0.8" />
<line x1="581.5" y1="711.5" x2="588.5" y2="711.5" stroke="#555" stroke-width="0.8" />
<path d="M618 715v-12h12v12M621 703v6h6v-6" fill="none" stroke="#555" stroke-width="0.9" />
<line x1="649" y1="709" x2="657" y2="709" stroke="#444" stroke-width="1.1" />
<line x1="662.5" y1="709.5" x2="760" y2="709.5" stroke="#c0c0c0" stroke-width="1" />
<rect x="709.5" y="703" width="5" height="13" fill="#555" stroke="none" stroke-width="1" rx="0" />
<line x1="764" y1="709" x2="772" y2="709" stroke="#444" stroke-width="1.1" />
<line x1="768" y1="705" x2="768" y2="713" stroke="#444" stroke-width="1.1" />
<text x="786" y="713" font-size="12" fill="#262626" font-weight="normal" font-style="normal" text-anchor="start" textLength="29.5" lengthAdjust="spacingAndGlyphs" >100 %</text>
<g filter="url(#sh2)">
<rect x="201" y="104" width="231.9" height="327.9" fill="#ffffff" stroke="#dcdcdc" stroke-width="0.8" rx="4" />
</g>
<text x="247.3" y="132.5" font-size="12.5" fill="#4e4e4e" font-weight="bold" font-style="normal" text-anchor="start" textLength="53.5" lengthAdjust="spacingAndGlyphs" >Больше...</text>
<text x="247.3" y="175.5" font-size="12.5" fill="#4e4e4e" font-weight="bold" font-style="normal" text-anchor="start" textLength="56.5" lengthAdjust="spacingAndGlyphs" >Меньше...</text>
<text x="247.3" y="219" font-size="12.5" fill="#4e4e4e" font-weight="bold" font-style="normal" text-anchor="start" textLength="48.5" lengthAdjust="spacingAndGlyphs" >Между...</text>
<text x="247.3" y="262" font-size="12.5" fill="#4e4e4e" font-weight="bold" font-style="normal" text-anchor="start" textLength="41.7" lengthAdjust="spacingAndGlyphs" >Равно...</text>
<text x="247.3" y="305.2" font-size="12.5" fill="#4e4e4e" font-weight="bold" font-style="normal" text-anchor="start" textLength="99" lengthAdjust="spacingAndGlyphs" >Текст содержит...</text>
<text x="247.3" y="347.3" font-size="12.5" fill="#4e4e4e" font-weight="bold" font-style="normal" text-anchor="start" textLength="34.2" lengthAdjust="spacingAndGlyphs" >Дата...</text>
<text x="247.3" y="391" font-size="12.5" fill="#4e4e4e" font-weight="bold" font-style="normal" text-anchor="start" textLength="162.9" lengthAdjust="spacingAndGlyphs" >Повторяющиеся значения...</text>
<line x1="247.3" y1="134" x2="256" y2="134" stroke="#4e4e4e" stroke-width="1" />
<line x1="278.6" y1="177" x2="287.3" y2="177" stroke="#4e4e4e" stroke-width="1" />
<line x1="247.3" y1="220.5" x2="258" y2="220.5" stroke="#4e4e4e" stroke-width="1" />
<line x1="247.3" y1="263.5" x2="255" y2="263.5" stroke="#4e4e4e" stroke-width="1" />
<line x1="247.3" y1="306.7" x2="255" y2="306.7" stroke="#4e4e4e" stroke-width="1" />
<line x1="257" y1="348.8" x2="263" y2="348.8" stroke="#4e4e4e" stroke-width="1" />
<line x1="247.3" y1="392.5" x2="256" y2="392.5" stroke="#4e4e4e" stroke-width="1" />
<rect x="210.6" y="114.6" width="26.69999999999999" height="20.599999999999994" fill="#fff" stroke="none" stroke-width="1" rx="0" />
<line x1="217.29999999999998" y1="114.6" x2="217.29999999999998" y2="135.2" stroke="#9a9a9a" stroke-width="1" />
<line x1="229.99999999999997" y1="114.6" x2="229.99999999999997" y2="135.2" stroke="#9a9a9a" stroke-width="1" />
<line x1="210.6" y1="121.0" x2="237.29999999999998" y2="121.0" stroke="#9a9a9a" stroke-width="1" />
<line x1="210.6" y1="128.2" x2="237.29999999999998" y2="128.2" stroke="#9a9a9a" stroke-width="1" />
<rect x="210.6" y="114.6" width="26.69999999999999" height="20.599999999999994" fill="none" stroke="#505050" stroke-width="1.1" rx="0" />
<rect x="217.29999999999998" y="121.0" width="12.699999999999989" height="7.199999999999989" fill="#f9dc8c" stroke="#ef8f1d" stroke-width="1.3" rx="0" />
<rect x="222.0" y="127.1" width="17.2" height="13.4" fill="#f8f8f8" stroke="#505050" stroke-width="1.1" rx="0" />
<path d="M228 130l7 3.9-7 3.9" fill="none" stroke="#505050" stroke-width="1.1" />
<rect x="210.6" y="157.6" width="26.69999999999999" height="20.599999999999994" fill="#fff" stroke="none" stroke-width="1" rx="0" />
<line x1="217.29999999999998" y1="157.6" x2="217.29999999999998" y2="178.2" stroke="#9a9a9a" stroke-width="1" />
<line x1="229.99999999999997" y1="157.6" x2="229.99999999999997" y2="178.2" stroke="#9a9a9a" stroke-width="1" />
<line x1="210.6" y1="164.0" x2="237.29999999999998" y2="164.0" stroke="#9a9a9a" stroke-width="1" />
<line x1="210.6" y1="171.2" x2="237.29999999999998" y2="171.2" stroke="#9a9a9a" stroke-width="1" />
<rect x="210.6" y="157.6" width="26.69999999999999" height="20.599999999999994" fill="none" stroke="#505050" stroke-width="1.1" rx="0" />
<rect x="217.29999999999998" y="164.0" width="12.699999999999989" height="7.199999999999989" fill="#f9dc8c" stroke="#ef8f1d" stroke-width="1.3" rx="0" />
<rect x="222.0" y="170.1" width="17.2" height="13.4" fill="#f8f8f8" stroke="#505050" stroke-width="1.1" rx="0" />
<path d="M234.3 173.3l-6.6 3.9 6.6 3.9" fill="none" stroke="#505050" stroke-width="1.1" />
<rect x="210.6" y="200.8" width="26.69999999999999" height="20.599999999999994" fill="#fff" stroke="none" stroke-width="1" rx="0" />
<line x1="217.29999999999998" y1="200.8" x2="217.29999999999998" y2="221.4" stroke="#9a9a9a" stroke-width="1" />
<line x1="229.99999999999997" y1="200.8" x2="229.99999999999997" y2="221.4" stroke="#9a9a9a" stroke-width="1" />
<line x1="210.6" y1="207.20000000000002" x2="237.29999999999998" y2="207.20000000000002" stroke="#9a9a9a" stroke-width="1" />
<line x1="210.6" y1="214.4" x2="237.29999999999998" y2="214.4" stroke="#9a9a9a" stroke-width="1" />
<rect x="210.6" y="200.8" width="26.69999999999999" height="20.599999999999994" fill="none" stroke="#505050" stroke-width="1.1" rx="0" />
<rect x="210.6" y="200.8" width="8" height="7" fill="#8ec0ee" stroke="#2b7cd3" stroke-width="1.2" rx="0" />
<rect x="229.99999999999997" y="200.8" width="7" height="7" fill="#8ec0ee" stroke="#2b7cd3" stroke-width="1.2" rx="0" />
<rect x="217.29999999999998" y="207.20000000000002" width="12" height="7" fill="#f9dc8c" stroke="#ef8f1d" stroke-width="1.2" rx="0" />
<rect x="210.6" y="244" width="26.69999999999999" height="20.600000000000023" fill="#fff" stroke="none" stroke-width="1" rx="0" />
<line x1="217.29999999999998" y1="244" x2="217.29999999999998" y2="264.6" stroke="#9a9a9a" stroke-width="1" />
<line x1="229.99999999999997" y1="244" x2="229.99999999999997" y2="264.6" stroke="#9a9a9a" stroke-width="1" />
<line x1="210.6" y1="250.4" x2="237.29999999999998" y2="250.4" stroke="#9a9a9a" stroke-width="1" />
<line x1="210.6" y1="257.6" x2="237.29999999999998" y2="257.6" stroke="#9a9a9a" stroke-width="1" />
<rect x="210.6" y="244" width="26.69999999999999" height="20.600000000000023" fill="none" stroke="#505050" stroke-width="1.1" rx="0" />
<rect x="217.29999999999998" y="250.4" width="12.699999999999989" height="7.200000000000017" fill="#f9dc8c" stroke="#ef8f1d" stroke-width="1.3" rx="0" />
<rect x="222.0" y="256.5" width="17.2" height="13.4" fill="#f8f8f8" stroke="#505050" stroke-width="1.1" rx="0" />
<line x1="227" y1="261.5" x2="235" y2="261.5" stroke="#444" stroke-width="1.1" />
<line x1="227" y1="265" x2="235" y2="265" stroke="#444" stroke-width="1.1" />
<rect x="210.6" y="287" width="26.69999999999999" height="20.599999999999966" fill="#fff" stroke="none" stroke-width="1" rx="0" />
<line x1="217.29999999999998" y1="287" x2="217.29999999999998" y2="307.59999999999997" stroke="#9a9a9a" stroke-width="1" />
<line x1="229.99999999999997" y1="287" x2="229.99999999999997" y2="307.59999999999997" stroke="#9a9a9a" stroke-width="1" />
<line x1="210.6" y1="293.4" x2="237.29999999999998" y2="293.4" stroke="#9a9a9a" stroke-width="1" />
<line x1="210.6" y1="300.59999999999997" x2="237.29999999999998" y2="300.59999999999997" stroke="#9a9a9a" stroke-width="1" />
<rect x="210.6" y="287" width="26.69999999999999" height="20.599999999999966" fill="none" stroke="#505050" stroke-width="1.1" rx="0" />
<rect x="217.29999999999998" y="293.4" width="12.699999999999989" height="7.199999999999989" fill="#f9dc8c" stroke="#ef8f1d" stroke-width="1.3" rx="0" />
<rect x="222.0" y="299.5" width="17.2" height="13.4" fill="#f8f8f8" stroke="#505050" stroke-width="1.1" rx="0" />
<text x="231.4" y="310.8" font-size="12.5" fill="#606060" font-weight="normal" font-style="normal" text-anchor="middle" >a</text>
<rect x="211" y="330" width="26.69999999999999" height="20.599999999999966" fill="#fff" stroke="none" stroke-width="1" rx="0" />
<line x1="217.7" y1="330" x2="217.7" y2="350.59999999999997" stroke="#9a9a9a" stroke-width="1" />
<line x1="230.39999999999998" y1="330" x2="230.39999999999998" y2="350.59999999999997" stroke="#9a9a9a" stroke-width="1" />
<line x1="211" y1="336.4" x2="237.7" y2="336.4" stroke="#9a9a9a" stroke-width="1" />
<line x1="211" y1="343.59999999999997" x2="237.7" y2="343.59999999999997" stroke="#9a9a9a" stroke-width="1" />
<rect x="211" y="330" width="26.69999999999999" height="20.599999999999966" fill="none" stroke="#505050" stroke-width="1.1" rx="0" />
<rect x="217.7" y="336.4" width="12.699999999999989" height="7.199999999999989" fill="#f9dc8c" stroke="#ef8f1d" stroke-width="1.3" rx="0" />
<rect x="225.2" y="342.5" width="15" height="14.2" fill="#f8f8f8" stroke="#505050" stroke-width="1.1" rx="0" />
<line x1="225.2" y1="345" x2="240.2" y2="345" stroke="#505050" stroke-width="1" />
<line x1="228.5" y1="340.5" x2="228.5" y2="344" stroke="#505050" stroke-width="1.1" />
<line x1="236.8" y1="340.5" x2="236.8" y2="344" stroke="#505050" stroke-width="1.1" />
<rect x="211" y="373.3" width="26.69999999999999" height="21.399999999999977" fill="#fff" stroke="none" stroke-width="1" rx="0" />
<line x1="217.7" y1="373.3" x2="217.7" y2="394.7" stroke="#9a9a9a" stroke-width="1" />
<line x1="231.0" y1="373.3" x2="231.0" y2="394.7" stroke="#9a9a9a" stroke-width="1" />
<line x1="211" y1="380.0" x2="237.7" y2="380.0" stroke="#9a9a9a" stroke-width="1" />
<line x1="211" y1="388.0" x2="237.7" y2="388.0" stroke="#9a9a9a" stroke-width="1" />
<rect x="211" y="373.3" width="26.69999999999999" height="21.399999999999977" fill="none" stroke="#505050" stroke-width="1.1" rx="0" />
<rect x="217.7" y="373.3" width="13.300000000000011" height="6.7" fill="#f9dc8c" stroke="#ef8f1d" stroke-width="1.3" rx="0" />
<rect x="217.7" y="388.0" width="13.300000000000011" height="6.7" fill="#f9dc8c" stroke="#ef8f1d" stroke-width="1.3" rx="0" />
<text x="234" y="423" font-size="12" fill="#555" font-weight="normal" font-style="normal" text-anchor="start" textLength="95" lengthAdjust="spacingAndGlyphs" >Другие правила...</text>
<line x1="258" y1="424.5" x2="263" y2="424.5" stroke="#555" stroke-width="1" />
<g filter="url(#sh2)">
<rect x="433" y="103" width="339" height="289.5" fill="#ffffff" stroke="#d4d4d4" stroke-width="0.8" rx="4" />
</g>
<rect x="429" y="107.5" width="343" height="37.5" fill="#c8c8c8" stroke="none" stroke-width="1" rx="0" />
<text x="478.5" y="130.1" font-size="12.5" fill="#262626" font-weight="bold" font-style="normal" text-anchor="start" textLength="154.3" lengthAdjust="spacingAndGlyphs" >Правила выделения ячеек</text>
<text x="478.5" y="173" font-size="12.5" fill="#4e4e4e" font-weight="bold" font-style="normal" text-anchor="start" textLength="270" lengthAdjust="spacingAndGlyphs" >Правила отбора первых и последних значений</text>
<text x="478.5" y="218.8" font-size="12.5" fill="#4e4e4e" font-weight="bold" font-style="normal" text-anchor="start" textLength="75.6" lengthAdjust="spacingAndGlyphs" >Гистограммы</text>
<text x="478.5" y="261.4" font-size="12.5" fill="#4e4e4e" font-weight="bold" font-style="normal" text-anchor="start" textLength="100.4" lengthAdjust="spacingAndGlyphs" >Цветовые шкалы</text>
<text x="478.5" y="304.8" font-size="12.5" fill="#4e4e4e" font-weight="bold" font-style="normal" text-anchor="start" textLength="93.2" lengthAdjust="spacingAndGlyphs" >Наборы значков</text>
<line x1="478.5" y1="131.6" x2="487" y2="131.6" stroke="#262626" stroke-width="1" />
<line x1="478.5" y1="174.5" x2="487" y2="174.5" stroke="#4e4e4e" stroke-width="1" />
<line x1="478.5" y1="220.3" x2="486" y2="220.3" stroke="#4e4e4e" stroke-width="1" />
<line x1="543" y1="262.9" x2="553" y2="262.9" stroke="#4e4e4e" stroke-width="1" />
<line x1="478.5" y1="306.3" x2="487" y2="306.3" stroke="#4e4e4e" stroke-width="1" />
<path d="M758.5 119.3l4 4-4 4z" fill="#6a6a6a" stroke="none" stroke-width="1" />
<path d="M758.5 162.5l4 4-4 4z" fill="#6a6a6a" stroke="none" stroke-width="1" />
<path d="M758.5 207.4l4 4-4 4z" fill="#6a6a6a" stroke="none" stroke-width="1" />
<path d="M758.5 249.6l4 4-4 4z" fill="#6a6a6a" stroke="none" stroke-width="1" />
<path d="M758.5 293l4 4-4 4z" fill="#6a6a6a" stroke="none" stroke-width="1" />
<line x1="477" y1="188" x2="771" y2="188" stroke="#e1e1e1" stroke-width="1" />
<line x1="434" y1="318.5" x2="771" y2="318.5" stroke="#e1e1e1" stroke-width="1" />
<rect x="442.4" y="112.8" width="26.69999999999999" height="20.60000000000001" fill="#fff" stroke="none" stroke-width="1" rx="0" />
<line x1="449.09999999999997" y1="112.8" x2="449.09999999999997" y2="133.4" stroke="#9a9a9a" stroke-width="1" />
<line x1="461.79999999999995" y1="112.8" x2="461.79999999999995" y2="133.4" stroke="#9a9a9a" stroke-width="1" />
<line x1="442.4" y1="119.2" x2="469.09999999999997" y2="119.2" stroke="#9a9a9a" stroke-width="1" />
<line x1="442.4" y1="126.4" x2="469.09999999999997" y2="126.4" stroke="#9a9a9a" stroke-width="1" />
<rect x="442.4" y="112.8" width="26.69999999999999" height="20.60000000000001" fill="none" stroke="#505050" stroke-width="1.1" rx="0" />
<rect x="449.09999999999997" y="119.2" width="12.699999999999989" height="7.200000000000003" fill="#f9dc8c" stroke="#ef8f1d" stroke-width="1.3" rx="0" />
<rect x="453.79999999999995" y="125.3" width="17.2" height="13.4" fill="#f8f8f8" stroke="#505050" stroke-width="1.1" rx="0" />
<text x="462.8" y="136" font-size="12" fill="#333" font-weight="normal" font-style="normal" text-anchor="middle" >≤</text>
<rect x="442.2" y="156.1" width="26.69999999999999" height="20.599999999999994" fill="#fff" stroke="none" stroke-width="1" rx="0" />
<line x1="449.09999999999997" y1="156.1" x2="449.09999999999997" y2="176.7" stroke="#9a9a9a" stroke-width="1" />
<line x1="462.4" y1="156.1" x2="462.4" y2="176.7" stroke="#9a9a9a" stroke-width="1" />
<line x1="442.2" y1="162.79999999999998" x2="468.9" y2="162.79999999999998" stroke="#9a9a9a" stroke-width="1" />
<line x1="442.2" y1="169.79999999999998" x2="468.9" y2="169.79999999999998" stroke="#9a9a9a" stroke-width="1" />
<rect x="442.2" y="156.1" width="26.69999999999999" height="20.599999999999994" fill="none" stroke="#505050" stroke-width="1.1" rx="0" />
<rect x="449.09999999999997" y="156.1" width="13.300000000000011" height="20.599999999999994" fill="#f9dc8c" stroke="#ef8f1d" stroke-width="1.3" rx="0" />
<line x1="449.09999999999997" y1="162.79999999999998" x2="462.4" y2="162.79999999999998" stroke="#c8a060" stroke-width="0.8" />
<line x1="449.09999999999997" y1="169.79999999999998" x2="462.4" y2="169.79999999999998" stroke="#c8a060" stroke-width="0.8" />
<path d="M455.5 169v-11M451.5 162l4-4 4 4" fill="none" stroke="#444" stroke-width="1.2" />
<rect x="453.6" y="168.3" width="17.5" height="13.4" fill="#f8f8f8" stroke="#505050" stroke-width="1.1" rx="0" />
<text x="462.4" y="179.5" font-size="10.5" fill="#666" font-weight="normal" font-style="normal" text-anchor="middle" textLength="11" lengthAdjust="spacingAndGlyphs" >10</text>
<rect x="442.2" y="201.1" width="26.69999999999999" height="20.899999999999977" fill="#fff" stroke="none" stroke-width="1" rx="0" />
<line x1="447.4" y1="201.1" x2="447.4" y2="221.99999999999997" stroke="#9a9a9a" stroke-width="1" />
<line x1="464.09999999999997" y1="201.1" x2="464.09999999999997" y2="221.99999999999997" stroke="#9a9a9a" stroke-width="1" />
<line x1="442.2" y1="207.79999999999998" x2="468.9" y2="207.79999999999998" stroke="#9a9a9a" stroke-width="1" />
<line x1="442.2" y1="214.99999999999997" x2="468.9" y2="214.99999999999997" stroke="#9a9a9a" stroke-width="1" />
<rect x="442.2" y="201.1" width="26.69999999999999" height="20.899999999999977" fill="none" stroke="#505050" stroke-width="1.1" rx="0" />
<rect x="447.4" y="201.1" width="8.2" height="6.7" fill="#8ec0ee" stroke="#2b7cd3" stroke-width="1.2" rx="0" />
<rect x="447.4" y="207.8" width="2.8" height="7.2" fill="#8ec0ee" stroke="#2b7cd3" stroke-width="1.2" rx="0" />
<rect x="447.4" y="215" width="6.2" height="7" fill="#8ec0ee" stroke="#2b7cd3" stroke-width="1.2" rx="0" />
<rect x="442.2" y="244" width="26.69999999999999" height="21.099999999999966" fill="#fff" stroke="none" stroke-width="1" rx="0" />
<line x1="447.09999999999997" y1="244" x2="447.09999999999997" y2="265.09999999999997" stroke="#9a9a9a" stroke-width="1" />
<line x1="464.7" y1="244" x2="464.7" y2="265.09999999999997" stroke="#9a9a9a" stroke-width="1" />
<line x1="442.2" y1="251.6" x2="468.9" y2="251.6" stroke="#9a9a9a" stroke-width="1" />
<line x1="442.2" y1="258.2" x2="468.9" y2="258.2" stroke="#9a9a9a" stroke-width="1" />
<rect x="442.2" y="244" width="26.69999999999999" height="21.099999999999966" fill="none" stroke="#505050" stroke-width="1.1" rx="0" />
<rect x="447.1" y="244" width="17.6" height="7.6" fill="#8ec0ee" stroke="#2b7cd3" stroke-width="1.3" rx="0" />
<rect x="447.1" y="251.6" width="17.6" height="6.6" fill="#f9dc8c" stroke="#ef8f1d" stroke-width="1.3" rx="0" />
<rect x="447.1" y="258.2" width="17.6" height="6.9" fill="#f99aa0" stroke="#e0403f" stroke-width="1.3" rx="0" />
<rect x="442.2" y="287.1" width="26.69999999999999" height="21.30000000000001" fill="#fff" stroke="none" stroke-width="1" rx="0" />
<line x1="447.09999999999997" y1="287.1" x2="447.09999999999997" y2="308.40000000000003" stroke="#9a9a9a" stroke-width="1" />
<line x1="464.7" y1="287.1" x2="464.7" y2="308.40000000000003" stroke="#9a9a9a" stroke-width="1" />
<line x1="442.2" y1="294.3" x2="468.9" y2="294.3" stroke="#9a9a9a" stroke-width="1" />
<line x1="442.2" y1="301.6" x2="468.9" y2="301.6" stroke="#9a9a9a" stroke-width="1" />
<rect x="442.2" y="287.1" width="26.69999999999999" height="21.30000000000001" fill="none" stroke="#505050" stroke-width="1.1" rx="0" />
<circle cx="450.4" cy="290.7" r="1.5" fill="#2b7cd3"/>
<line x1="457.5" y1="290.7" x2="462.5" y2="290.7" stroke="#666" stroke-width="1.1" />
<circle cx="450.4" cy="297.9" r="1.5" fill="#e0403f"/>
<line x1="457.5" y1="297.9" x2="462.5" y2="297.9" stroke="#666" stroke-width="1.1" />
<circle cx="450.4" cy="305" r="1.5" fill="#2b7cd3"/>
<line x1="457.5" y1="305" x2="462.5" y2="305" stroke="#666" stroke-width="1.1" />
<rect x="438" y="326.1" width="15.8" height="13.9" fill="#fff" stroke="none" stroke-width="1" rx="0" />
<line x1="442.266" y1="326.1" x2="442.266" y2="340.0" stroke="#999" stroke-width="0.9" />
<line x1="450.008" y1="326.1" x2="450.008" y2="340.0" stroke="#999" stroke-width="0.9" />
<line x1="438" y1="330.27000000000004" x2="453.8" y2="330.27000000000004" stroke="#999" stroke-width="0.9" />
<line x1="438" y1="335.552" x2="453.8" y2="335.552" stroke="#999" stroke-width="0.9" />
<rect x="438" y="326.1" width="15.8" height="13.9" fill="none" stroke="#505050" stroke-width="1" rx="0" />
<rect x="442.266" y="330.27000000000004" width="7.741999999999962" height="5.281999999999982" fill="#f9dc8c" stroke="#ef8f1d" stroke-width="1.1" rx="0" />
<rect x="438" y="350.2" width="15.8" height="12.6" fill="#fff" stroke="none" stroke-width="1" rx="0" />
<line x1="442.266" y1="350.2" x2="442.266" y2="362.8" stroke="#999" stroke-width="0.9" />
<line x1="450.008" y1="350.2" x2="450.008" y2="362.8" stroke="#999" stroke-width="0.9" />
<line x1="438" y1="353.97999999999996" x2="453.8" y2="353.97999999999996" stroke="#999" stroke-width="0.9" />
<line x1="438" y1="358.768" x2="453.8" y2="358.768" stroke="#999" stroke-width="0.9" />
<rect x="438" y="350.2" width="15.8" height="12.6" fill="none" stroke="#505050" stroke-width="1" rx="0" />
<rect x="442.266" y="353.97999999999996" width="7.741999999999962" height="4.788000000000011" fill="#f9dc8c" stroke="#ef8f1d" stroke-width="1.1" rx="0" />
<path d="M444.5 360.5l6.5-7 3 2.8-6.5 7z" fill="#b062d0" stroke="#9c40c0" stroke-width="1" />
<line x1="447.5" y1="359" x2="450" y2="356.5" stroke="#fff" stroke-width="1" />
<rect x="440" y="374.6" width="13.6" height="12" fill="#fff" stroke="none" stroke-width="1" rx="0" />
<line x1="443.672" y1="374.6" x2="443.672" y2="386.6" stroke="#999" stroke-width="0.9" />
<line x1="450.336" y1="374.6" x2="450.336" y2="386.6" stroke="#999" stroke-width="0.9" />
<line x1="440" y1="378.20000000000005" x2="453.6" y2="378.20000000000005" stroke="#999" stroke-width="0.9" />
<line x1="440" y1="382.76000000000005" x2="453.6" y2="382.76000000000005" stroke="#999" stroke-width="0.9" />
<rect x="440" y="374.6" width="13.6" height="12" fill="none" stroke="#505050" stroke-width="1" rx="0" />
<rect x="443.672" y="378.20000000000005" width="6.663999999999987" height="4.560000000000002" fill="#f9dc8c" stroke="#ef8f1d" stroke-width="1.1" rx="0" />
<path d="M438.5 384.5v-12.5h13.5" fill="none" stroke="#505050" stroke-width="1" />
<text x="465.9" y="337.2" font-size="12" fill="#505050" font-weight="normal" font-style="normal" text-anchor="start" textLength="99.2" lengthAdjust="spacingAndGlyphs" >Создать правило...</text>
<text x="465.9" y="360.5" font-size="12" fill="#505050" font-weight="normal" font-style="normal" text-anchor="start" textLength="90.1" lengthAdjust="spacingAndGlyphs" >Удалить правила</text>
<text x="465.9" y="383.8" font-size="12" fill="#505050" font-weight="normal" font-style="normal" text-anchor="start" textLength="136.5" lengthAdjust="spacingAndGlyphs" >Управление правилами...</text>
<line x1="465.9" y1="338.7" x2="474" y2="338.7" stroke="#505050" stroke-width="1" />
<line x1="465.9" y1="362" x2="474" y2="362" stroke="#505050" stroke-width="1" />
<line x1="523" y1="385.3" x2="530" y2="385.3" stroke="#505050" stroke-width="1" />
<path d="M758.5 352l4 4-4 4z" fill="#6a6a6a" stroke="none" stroke-width="1" />
<g filter="url(#bs)">
<rect x="201.5" y="103.5" width="223.5" height="300.5" fill="none" stroke="#000" stroke-width="4" rx="8" />
<rect x="423.5" y="68.7" width="221.4" height="35.3" fill="none" stroke="#000" stroke-width="4" rx="7" />
<rect x="426.7" y="105" width="348" height="42.5" fill="none" stroke="#000" stroke-width="4" rx="8" />
</g>
<circle cx="661.5" cy="60.2" r="21.4" fill="#2c2c2c" fill-opacity="0.9"/>
<path d="M659.25 70.4V57.2L656.3 57.9Q655.3 58 655.3 57V54.6Q655.3 53.8 656.2 53.4L660.6 50.6Q661.2 50.2 662 50.2H663.8Q664.7 50.2 664.7 51.1V69.5Q664.7 70.4 663.8 70.4H660.2Q659.25 70.4 659.25 69.5Z" fill="#fff" stroke="#111" stroke-width="2.4" stroke-linejoin="round" paint-order="stroke"/>
<circle cx="779" cy="155.4" r="21.4" fill="#2c2c2c" fill-opacity="0.9"/>
<path d="M773.9 151.2A4.4 4.4 0 0 1 782.8 152.4Q782.8 155.2 779.6 158.2L774.2 163.1H783.2" fill="none" stroke="#111" stroke-width="6.2" stroke-linejoin="round" stroke-linecap="butt"/>
<path d="M773.9 151.2A4.4 4.4 0 0 1 782.8 152.4Q782.8 155.2 779.6 158.2L774.2 163.1H783.2" fill="none" stroke="#fff" stroke-width="3.8" stroke-linejoin="round" stroke-linecap="butt"/>
<circle cx="191" cy="409.1" r="21.4" fill="#2c2c2c" fill-opacity="0.9"/>
<path d="M185.6 402.6Q187.4 400.9 190.2 400.9Q194 400.9 194 404.5Q194 408.3 188.6 408.3Q194.4 408.3 194.4 412.6Q194.4 417 189.8 417Q187 417 185.5 415.6" fill="none" stroke="#111" stroke-width="6.2" stroke-linejoin="round" stroke-linecap="butt"/>
<path d="M185.6 402.6Q187.4 400.9 190.2 400.9Q194 400.9 194 404.5Q194 408.3 188.6 408.3Q194.4 408.3 194.4 412.6Q194.4 417 189.8 417Q187 417 185.5 415.6" fill="none" stroke="#fff" stroke-width="3.8" stroke-linejoin="round" stroke-linecap="butt"/>
</svg></body></html>
